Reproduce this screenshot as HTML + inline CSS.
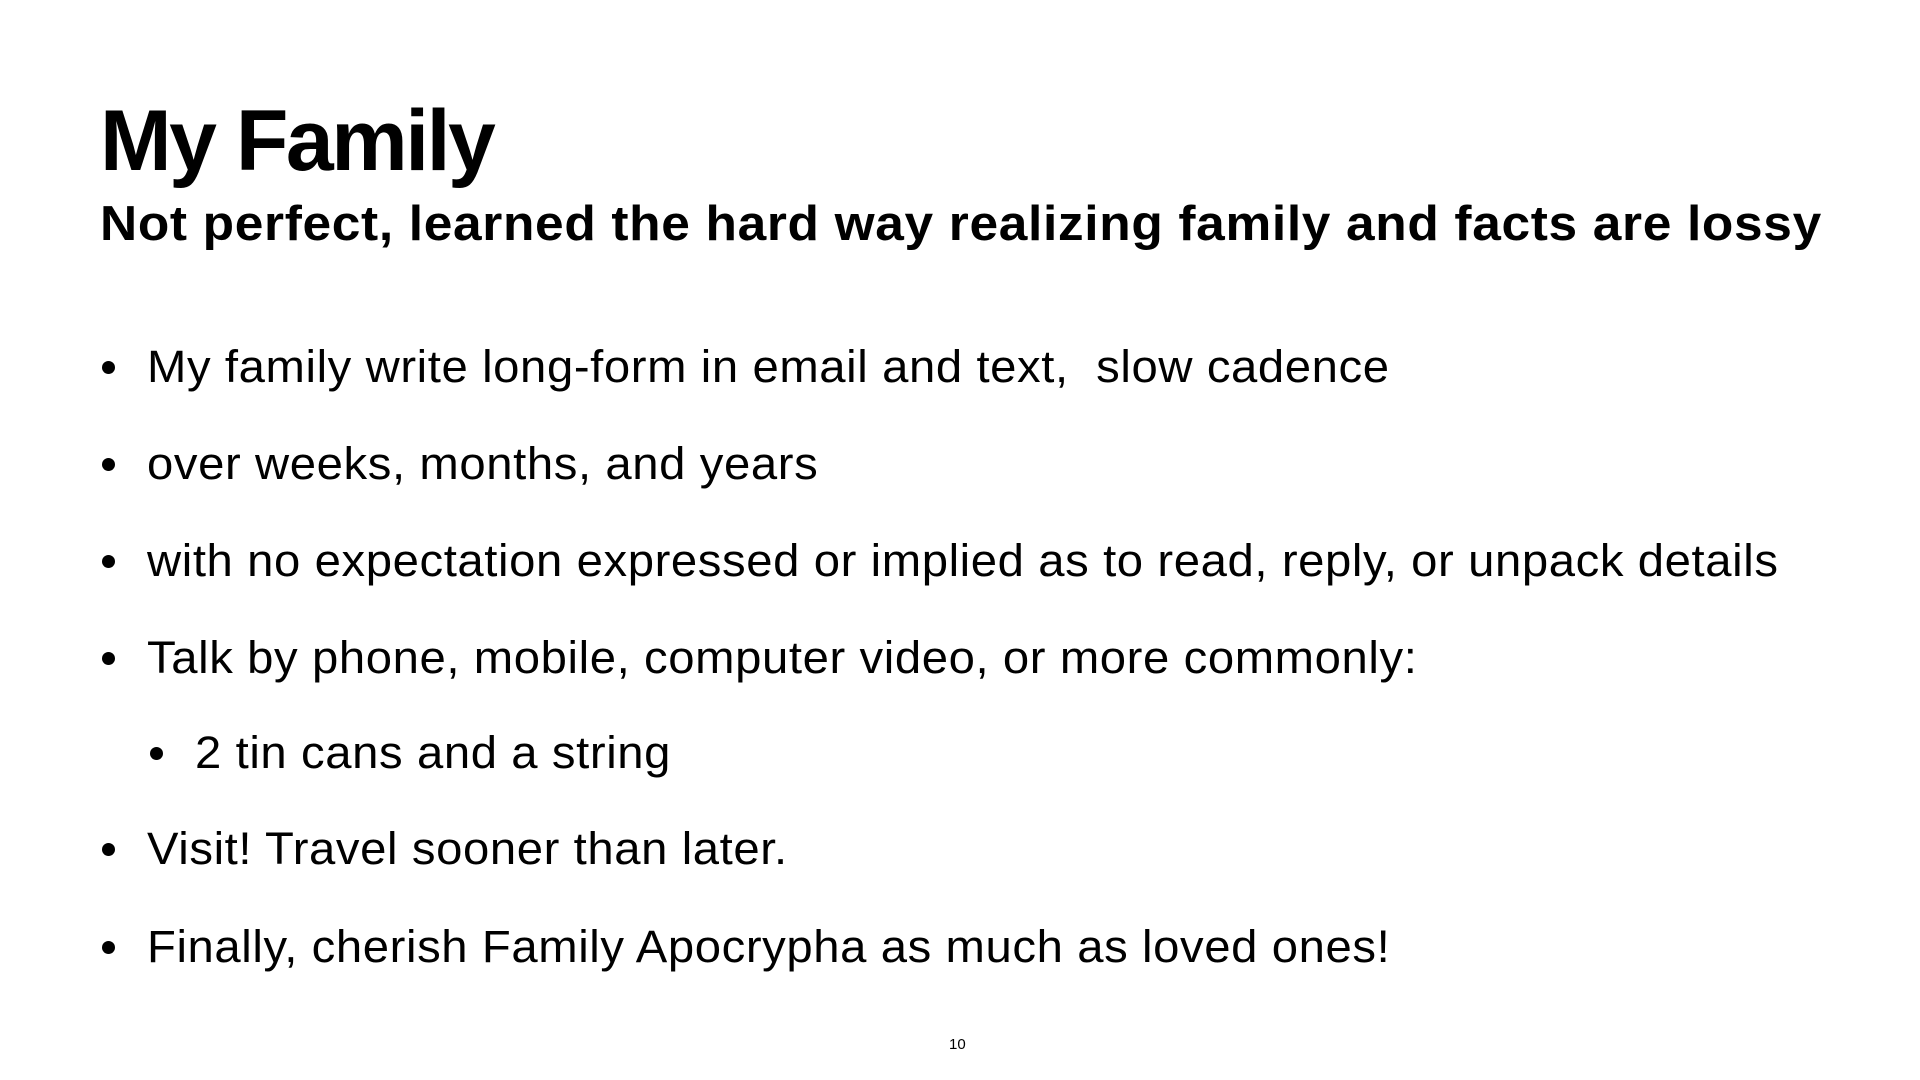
<!DOCTYPE html>
<html><head><meta charset="utf-8"><style>
html,body{margin:0;padding:0;background:#fff;}
body{width:1920px;height:1080px;position:relative;overflow:hidden;font-family:"Liberation Sans",Arial,sans-serif;color:#000;}
.a{position:absolute;white-space:nowrap;}
.t{left:100px;top:98px;font-size:86px;line-height:86px;font-weight:bold;letter-spacing:-2.5px;}
.s{left:100px;top:199px;font-size:49px;line-height:50px;font-weight:bold;letter-spacing:0.63px;transform:scaleX(1.05);transform-origin:0 0;}
.b{font-size:45px;line-height:46px;letter-spacing:0.57px;transform:scaleX(1.05);transform-origin:0 0;}
.d{position:absolute;width:13px;height:13px;border-radius:50%;background:#000;}
.n{left:949px;top:1036px;font-size:15px;}
</style></head><body>
<div class="a t">My Family</div>
<div class="a s">Not perfect, learned the hard way realizing family and facts are lossy</div>

<div class="d" style="left:102px;top:361px"></div><div class="a b" style="left:147px;top:344px">My family write long-form in email and text,&nbsp; slow cadence</div>
<div class="d" style="left:102px;top:458px"></div><div class="a b" style="left:147px;top:441px">over weeks, months, and years</div>
<div class="d" style="left:102px;top:555px"></div><div class="a b" style="left:147px;top:538px">with no expectation expressed or implied as to read, reply, or unpack details</div>
<div class="d" style="left:102px;top:652px"></div><div class="a b" style="left:147px;top:635px">Talk by phone, mobile, computer video, or more commonly:</div>
<div class="d" style="left:150px;top:747px"></div><div class="a b" style="left:195px;top:730px">2 tin cans and a string</div>
<div class="d" style="left:102px;top:843px"></div><div class="a b" style="left:147px;top:826px">Visit! Travel sooner than later.</div>
<div class="d" style="left:102px;top:941px"></div><div class="a b" style="left:147px;top:924px">Finally, cherish Family Apocrypha as much as loved ones!</div>

<div class="a n">10</div>
</body></html>
